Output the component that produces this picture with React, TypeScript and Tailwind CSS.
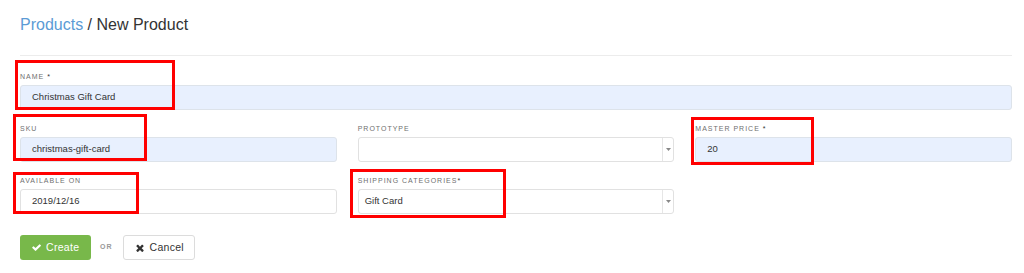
import React from "react";

const Label = ({ text, star, tight }: { text: string; star?: boolean; tight?: boolean }) => (
  <div className="h-[10px] mb-[3px] text-[7px] leading-[10px] tracking-[1px] uppercase text-[#6f6f6f] whitespace-nowrap">
    {text}
    {star && <span className={tight ? "text-[#333] tracking-normal" : "ml-[3px] text-[#333] tracking-normal"}>*</span>}
  </div>
);

const Input = ({ value, filled }: { value?: string; filled?: boolean }) => (
  <div
    className={
      "h-[25px] rounded-[3px] border pl-[11px] flex items-center text-[9.5px] text-[#333] " +
      (filled ? "bg-[#e8f0fe] border-[#dde3ea]" : "bg-white border-[#e1e1e1]")
    }
  >
    {value}
  </div>
);

const Select = ({ value }: { value?: string }) => (
  <div className="h-[25px] rounded-[3px] border border-[#e1e1e1] bg-white flex items-stretch text-[9.5px] text-[#333]">
    <div className="flex-1 flex items-center pl-[6px]">{value}</div>
    <div className="w-[11px] border-l border-[#e6e6e6] flex items-center justify-center">
      <svg width="5" height="3" viewBox="0 0 5 3">
        <path d="M0 0 L5 0 L2.5 3 Z" fill="#888" />
      </svg>
    </div>
  </div>
);

const RedBox = ({ className }: { className: string }) => (
  <div className={"absolute border-[3px] border-[#ff0000] pointer-events-none " + className} />
);

export default function App() {
  return (
    <div className="relative w-[1024px] h-[273px] bg-white overflow-hidden font-['Liberation_Sans',Arial,sans-serif]">
      <div className="pl-[20px] pr-[12px] pt-[15px]">
        <h1 className="text-[16px] leading-[20px] text-[#333]">
          <span className="text-[#5b9bd5]">Products</span> / New Product
        </h1>
        <div className="mt-[20px] border-t border-[#ececec]" />
        <div className="pt-[16px]">
          <Label text="Name" star />
          <Input value="Christmas Gift Card" filled />
        </div>
        <div className="grid grid-cols-3 gap-x-[21px] gap-y-[14px] mt-[14px]">
          <div>
            <Label text="SKU" />
            <Input value="christmas-gift-card" filled />
          </div>
          <div>
            <Label text="Prototype" />
            <Select />
          </div>
          <div>
            <Label text="Master Price" star />
            <Input value="20" filled />
          </div>
          <div>
            <Label text="Available On" />
            <Input value="2019/12/16" />
          </div>
          <div>
            <Label text="Shipping Categories" star tight />
            <Select value="Gift Card" />
          </div>
          <div />
        </div>
        <div className="mt-[21px] flex items-center">
          <button className="h-[25px] w-[71px] rounded-[3px] bg-[#78b84a] text-white text-[10.5px] flex items-center pl-[12px] gap-[5px]">
            <svg width="9" height="7" viewBox="90 380 1590 1060">
              <path
                fill="#fff"
                d="M1671 566q0 40-28 68l-724 724-136 136q-28 28-68 28t-68-28l-136-136-362-362q-28-28-28-68t28-68l136-136q28-28 68-28t68 28l294 295 656-657q28-28 68-28t68 28l136 136q28 28 28 68z"
              />
            </svg>
            <span className="tracking-[0.3px]">Create</span>
          </button>
          <span className="ml-[9px] mr-[10px] text-[7px] font-bold tracking-[1px] text-[#999]">OR</span>
          <button className="h-[25px] w-[72px] rounded-[3px] border border-[#dcdcdc] bg-white text-[#333] text-[10.5px] flex items-center pl-[12px] gap-[6px]">
            <svg width="8" height="8" viewBox="110 260 1190 1300">
              <path
                fill="#333"
                d="M1298 1322q0 40-28 68l-136 136q-28 28-68 28t-68-28l-294-294-294 294q-28 28-68 28t-68-28l-136-136q-28-28-28-68t28-68l294-294-294-294q-28-28-28-68t28-68l136-136q28-28 68-28t68 28l294 294 294-294q28-28 68-28t68 28l136 136q28 28 28 68t-28 68l-294 294 294 294q28 28 28 68z"
              />
            </svg>
            <span className="tracking-[0.3px]">Cancel</span>
          </button>
        </div>
      </div>
      <RedBox className="left-[15px] top-[60px] w-[160px] h-[50px]" />
      <RedBox className="left-[13px] top-[114px] w-[134px] h-[47px]" />
      <RedBox className="left-[691px] top-[117px] w-[123px] h-[48px]" />
      <RedBox className="left-[13px] top-[172px] w-[126px] h-[42px]" />
      <RedBox className="left-[350px] top-[169px] w-[156px] h-[49px]" />
    </div>
  );
}
